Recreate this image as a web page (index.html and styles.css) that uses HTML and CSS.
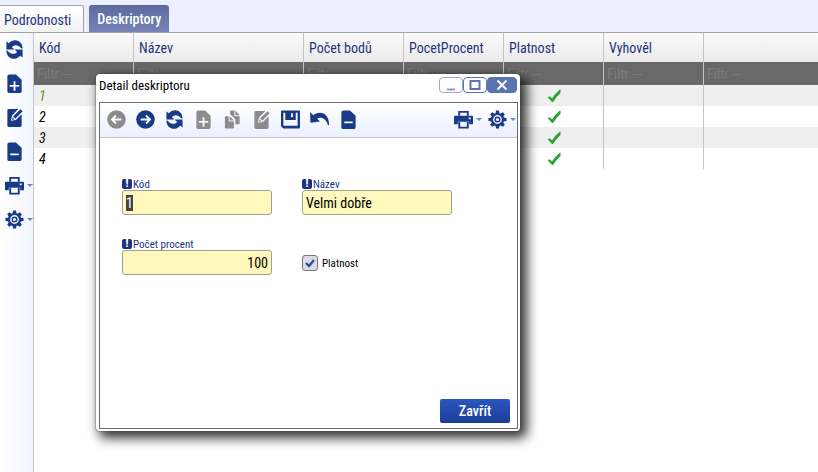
FILE: index.html
```html
<!DOCTYPE html>
<html lang="cs">
<head>
    <meta charset="UTF-8">
    <meta name="viewport" content="width=device-width, initial-scale=1.0">
    <title>Deskriptory</title>
    <link rel="stylesheet" href="styles.css">
</head>
<body>
    <!-- Shared icons -->
    <svg class="sprite" aria-hidden="true">
        <symbol id="refresh" viewBox="0 0 20 20">
            <path d="M1.500 1.500v8.500H10L7.200 7.500C9.500 4.500 14 4.500 17.500 9h1C18.500 0 9-2.500 4 3.500z"/>
            <path d="M18.500 18.500V10H10l2.800 2.500C10.500 15.500 6 15.500 2.500 11h-1C1.500 20 11 22.500 16 16.500z"/>
        </symbol>
        <symbol id="add" viewBox="0 0 20 20">
            <path fill-rule="evenodd" d="M4.500.5h7L17.500 6v12.500q0 1.500-1.500 1.500H4Q2.500 20 2.500 18.500v-16q0-2 2-2zM9 7.500v4H5v2h4v4h2v-4h4v-2h-4v-4z"/>
        </symbol>
        <symbol id="remove" viewBox="0 0 20 20">
            <path fill-rule="evenodd" d="M4.500.5h7L17.500 6v12.500q0 1.500-1.500 1.500H4Q2.500 20 2.500 18.500v-16q0-2 2-2zM5.500 12v2h9v-2z"/>
        </symbol>
        <symbol id="copy" viewBox="0 0 20 20">
            <path d="M3 6.500h3v5.500h5.500V18.500q0 1-1 1H3q-1 0-1-1v-11q0-1 1-1zM7 6.500l4.500 4.500H7z"/>
            <path d="M8.500.5h3.500v6h5.500V14q0 1-1 1H13V10L8.500 5H7.500V1.500q0-1 1-1zM13 .5l4.500 5H13z"/>
        </symbol>
        <symbol id="edit" viewBox="0 0 20 20">
            <path d="M4 1h10L7.500 8l-1.300 5.500L11.500 12.500 17.500 6.500V18.500q0 1.500-1.500 1.500H4Q2.500 20 2.500 18.500v-16Q2.500 1 4 1z"/>
            <path d="M8.500 9L16.300 1.200l2.300 2.200-7.800 7.800zM7.900 10l2 1.900-2.500.600z"/>
        </symbol>
        <symbol id="printer" viewBox="0 0 20 20">
            <path fill-rule="evenodd" d="M4.500 1h11v5h-11zM6.500 3V6h7V3z"/>
            <path fill-rule="evenodd" d="M1 6h18q1 0 1 1v8h-4v-3H4v3H0V7q0-1 1-1zM15.500 8v1.800h2V8z"/>
            <path fill-rule="evenodd" d="M4.500 12h11v7.500h-11zM6.500 12.500v5h7v-5z"/>
        </symbol>
        <symbol id="gear" viewBox="0 0 20 20">
            <circle cx="10" cy="10" r="5.800" fill="none" stroke="currentColor" stroke-width="2.300"/>
            <circle cx="10" cy="10" r="2.400" fill="none" stroke="currentColor" stroke-width="1.500"/>
            <path d="M8.500.5h3l.7 3.500H7.800zM8.500 19.500h3l.7-3.500H7.800zM.5 8.500v3l3.500.7V7.800zM19.500 8.500v3l-3.500.7V7.800z"/>
            <path d="M2.300 4.400l2.100-2.100 3 2-3.100 3.100zM17.700 4.400l-2.100-2.100-3 2 3.100 3.100zM2.300 15.600l2.100 2.100 3-2-3.100-3.100zM17.700 15.600l-2.100 2.100-3-2 3.100-3.100z"/>
        </symbol>
        <symbol id="back" viewBox="0 0 20 20">
            <circle cx="10" cy="10" r="9.800"/>
            <path class="cut" d="M15 10H5.500M9.500 5.800L5.300 10l4.200 4.200"/>
        </symbol>
        <symbol id="forward" viewBox="0 0 20 20">
            <circle cx="10" cy="10" r="9.800"/>
            <path class="cut" d="M5 10h9.500M10.500 5.800l4.200 4.200-4.200 4.200"/>
        </symbol>
        <symbol id="save" viewBox="0 0 20 20">
            <path fill-rule="evenodd" d="M1 .5h18q1 0 1 1v17q0 1-1 1H2.500L0 17V1.500Q0 .5 1 .5zM2.500 3v13.500h15V3h-2v7.500h-11V3z"/>
            <path d="M5.500 2h9v7h-9z"/>
            <path class="cut-fill" d="M10.500 3.500h2v4h-2z"/>
        </symbol>
        <symbol id="undo" viewBox="0 0 20 20">
            <path d="M0 2l.5 11.500L10.500 12 7.500 9c4.500-2 9 0 11.500 7h1C20.500 4.500 11.500-.5 3.500 5.500z"/>
        </symbol>
        <symbol id="check" viewBox="0 0 14 14">
            <path d="M.5 8L3 7.500l2 2Q8.500 4 13 .5h.5V4Q9 8 6 13H5z"/>
        </symbol>
    </svg>

    <nav class="tabs">
        <a href="#" class="tab">Podrobnosti</a>
        <a href="#" class="tab tab-active">Deskriptory</a>
    </nav>

    <main class="content">
        <div class="side-bar">
            <button type="button" class="icon-btn" aria-label="Obnovit"><svg><use href="#refresh"/></svg></button>
            <button type="button" class="icon-btn" aria-label="Přidat"><svg><use href="#add"/></svg></button>
            <button type="button" class="icon-btn" aria-label="Upravit"><svg><use href="#edit"/></svg></button>
            <button type="button" class="icon-btn" aria-label="Smazat"><svg><use href="#remove"/></svg></button>
            <button type="button" class="icon-btn has-menu" aria-label="Tisk"><svg><use href="#printer"/></svg></button>
            <button type="button" class="icon-btn has-menu" aria-label="Nastavení"><svg><use href="#gear"/></svg></button>
        </div>

        <div class="grid-wrap">
            <table class="grid">
                <colgroup>
                    <col class="col"><col class="col-wide"><col class="col"><col class="col"><col class="col"><col class="col"><col>
                </colgroup>
                <thead>
                    <tr>
                        <th>Kód</th>
                        <th>Název</th>
                        <th>Počet bodů</th>
                        <th>PocetProcent</th>
                        <th>Platnost</th>
                        <th>Vyhověl</th>
                        <th></th>
                    </tr>
                    <tr class="filters">
                        <td><input type="text" placeholder="Filtr ---" aria-label="Filtr Kód"></td>
                        <td><input type="text" placeholder="Filtr ---" aria-label="Filtr Název"></td>
                        <td><input type="text" placeholder="Filtr ---" aria-label="Filtr Počet bodů"></td>
                        <td><input type="text" placeholder="Filtr ---" aria-label="Filtr PocetProcent"></td>
                        <td><input type="text" placeholder="Filtr ---" aria-label="Filtr Platnost"></td>
                        <td><input type="text" placeholder="Filtr ---" aria-label="Filtr Vyhověl"></td>
                        <td><input type="text" placeholder="Filtr ---" aria-label="Filtr"></td>
                    </tr>
                </thead>
                <tbody>
                    <tr class="current"><td>1</td><td></td><td></td><td></td><td class="tick"><svg><use href="#check"/></svg></td><td></td><td></td></tr>
                    <tr><td>2</td><td></td><td></td><td></td><td class="tick"><svg><use href="#check"/></svg></td><td></td><td></td></tr>
                    <tr><td>3</td><td></td><td></td><td></td><td class="tick"><svg><use href="#check"/></svg></td><td></td><td></td></tr>
                    <tr><td>4</td><td></td><td></td><td></td><td class="tick"><svg><use href="#check"/></svg></td><td></td><td></td></tr>
                </tbody>
            </table>
        </div>
    </main>

    <!-- Detail window -->
    <div class="dialog" role="dialog" aria-labelledby="dialogTitle">
        <div class="dialog-head">
            <span id="dialogTitle">Detail deskriptoru</span>
            <div class="win-buttons">
                <button type="button" class="win-btn" aria-label="Minimalizovat"><svg viewBox="0 0 12 12"><path d="M2 10.500h8" stroke="#8f9cc0"/></svg></button>
                <button type="button" class="win-btn win-max" aria-label="Maximalizovat"><svg viewBox="0 0 12 12"><path d="M1.500 2h9v8h-9z"/></svg></button>
                <button type="button" class="win-btn win-close" aria-label="Zavřít okno"><svg viewBox="0 0 12 12"><path d="M1.500 1.500l9 9M10.500 1.500l-9 9"/></svg></button>
            </div>
        </div>

        <div class="dialog-body">
            <div class="toolbar">
                <button type="button" class="icon-btn" aria-label="Předchozí" disabled><svg><use href="#back"/></svg></button>
                <button type="button" class="icon-btn" aria-label="Další"><svg><use href="#forward"/></svg></button>
                <button type="button" class="icon-btn" aria-label="Obnovit"><svg><use href="#refresh"/></svg></button>
                <button type="button" class="icon-btn" aria-label="Přidat" disabled><svg><use href="#add"/></svg></button>
                <button type="button" class="icon-btn" aria-label="Kopírovat" disabled><svg><use href="#copy"/></svg></button>
                <button type="button" class="icon-btn" aria-label="Upravit" disabled><svg><use href="#edit"/></svg></button>
                <button type="button" class="icon-btn" aria-label="Uložit"><svg><use href="#save"/></svg></button>
                <button type="button" class="icon-btn" aria-label="Zpět"><svg><use href="#undo"/></svg></button>
                <button type="button" class="icon-btn" aria-label="Smazat"><svg><use href="#remove"/></svg></button>
                <div class="toolbar-right">
                    <button type="button" class="icon-btn has-menu" aria-label="Tisk"><svg><use href="#printer"/></svg></button>
                    <button type="button" class="icon-btn has-menu" aria-label="Nastavení"><svg><use href="#gear"/></svg></button>
                </div>
            </div>

            <form id="detailForm" class="form">
                <div class="field">
                    <label for="kod" class="required">Kód</label>
                    <input type="text" id="kod" value="1">
                </div>
                <div class="field">
                    <label for="nazev" class="required">Název</label>
                    <input type="text" id="nazev" value="Velmi dobře">
                </div>
                <div class="field">
                    <label for="procent" class="required">Počet procent</label>
                    <input type="text" id="procent" class="number" value="100">
                </div>
                <div class="check-field">
                    <input type="checkbox" id="platnost" checked>
                    <label for="platnost">Platnost</label>
                </div>
            </form>

            <div class="dialog-foot">
                <button type="button" class="btn">Zavřít</button>
            </div>
        </div>
    </div>

    <script>
        // Start with the first field selected
        document.getElementById("kod").focus();
        document.getElementById("kod").select();
    </script>
</body>
</html>
```
FILE: styles.css
```css
* {
    box-sizing: border-box;
}
body {
    margin: 0;
    min-height: 100vh;
    display: flex;
    flex-direction: column;
    font-family: "Roboto Condensed", Roboto, sans-serif;
    font-size: 14px;
    background-color: #fff;
    color: #000;
}
button,
input {
    font-family: inherit;
    font-size: inherit;
}
.sprite {
    position: absolute;
    width: 0;
    height: 0;
}

/* Tabs */
.tabs {
    display: flex;
    gap: 5px;
    height: 33px;
    padding-top: 5px;
    background-color: #ebefff;
    border-bottom: 1px solid #a3a3a3;
}
.tab {
    padding: 0 12px 0 4px;
    line-height: 28px;
    color: #1c3480;
    text-decoration: none;
    background: linear-gradient(#fff, #f3f3f3);
    border: 1px solid #a3a3a3;
    border-width: 1px 1px 0 0;
    border-radius: 0 3px 0 0;
}
.tab-active {
    padding: 0 8px;
    color: #fff;
    font-weight: 500;
    background: linear-gradient(#5c6b9e, #7683b4);
    border: none;
    border-radius: 3px 3px 0 0;
}

/* Icons */
.icon-btn {
    position: relative;
    display: flex;
    align-items: center;
    justify-content: center;
    width: 29px;
    height: 34px;
    padding: 0 0 1px;
    border: none;
    background: none;
    color: #183a87;
    cursor: pointer;
}
.icon-btn svg {
    width: 19px;
    height: 19px;
    fill: currentColor;
}
.icon-btn:disabled {
    color: #8c8c8c;
}
.has-menu::after {
    content: "";
    position: absolute;
    right: -4px;
    top: 15px;
    border: 3px solid transparent;
    border-top-color: #6f87bd;
    border-bottom: none;
}
.cut {
    fill: none;
    stroke: #fff;
    stroke-width: 2px;
}
.cut-fill {
    fill: #fff;
}

/* Grid with side bar */
.content {
    flex: 1;
    display: flex;
}
.side-bar {
    width: 34px;
    flex-shrink: 0;
    border-right: 1px solid #c4c4c4;
    background: linear-gradient(90deg, #fff, #f2f5ff);
}
.grid-wrap {
    flex: 1;
    min-width: 0;
}
.grid {
    width: 100%;
    table-layout: fixed;
    border-spacing: 0;
}
.col {
    width: 100px;
}
.col-wide {
    width: 170px;
}
.grid th {
    height: 29px;
    padding: 1px 5px 0;
    text-align: left;
    font-weight: 400;
    color: #1c3480;
    background: linear-gradient(#fafafa, #ebebeb);
}
.grid td {
    height: 21px;
    padding: 0 5px;
    font-style: italic;
}
.grid th:not(:last-child),
.grid td:not(:last-child) {
    border-right: 1px solid #c4c4c4;
}
.grid .filters td {
    height: 23px;
    padding: 0 3px;
    background-color: #696969;
}
.filters input {
    display: block;
    width: 100%;
    padding: 0;
    border: none;
    background: none;
    color: #fff;
}
.filters input::placeholder {
    color: #7c7c7c;
}
.grid tbody tr:nth-child(odd) {
    background-color: #efefef;
}
.current td {
    color: #5b9a0e;
}
.tick svg {
    display: block;
    width: 14px;
    height: 14px;
    margin: 0 auto;
    fill: #2ba32f;
}

/* Detail window */
.dialog {
    position: absolute;
    left: 96px;
    top: 74px;
    width: 424px;
    padding: 0 2px 2px 3px;
    background-color: #fff;
    border-radius: 4px;
    box-shadow: 0 0 2px #444, 5px 5px 12px 2px rgba(0, 0, 0, 0.8);
}
.dialog-head {
    display: flex;
    justify-content: space-between;
    height: 28px;
    padding: 3px 1px 0 0;
    font-size: 13px;
    line-height: 17px;
}
.win-buttons {
    display: flex;
}
.win-btn {
    display: flex;
    align-items: center;
    justify-content: center;
    width: 24px;
    height: 16px;
    padding: 0;
    border: 1px solid #9aa8cb;
    border-radius: 4px;
    background-color: #fff;
}
.win-btn svg {
    width: 12px;
    height: 12px;
    fill: none;
    stroke: #5b74b0;
    stroke-width: 2px;
}
.win-max {
    border-color: #5b74b0;
}
.win-close {
    width: 30px;
    border-color: #5b74b0;
    background-color: #5b74b0;
}
.win-close svg {
    stroke: #fff;
}
.dialog-body {
    border: 1px solid #6b6b6b;
}
.toolbar {
    display: flex;
    padding-left: 2px;
    background: linear-gradient(#fff, #ebf0ff);
    border-bottom: 1px solid #c4c4c4;
}
.toolbar-right {
    display: flex;
    gap: 5px;
    margin-left: auto;
    padding-right: 5px;
}
.form {
    display: grid;
    grid-template-columns: 150px 150px;
    gap: 24px 30px;
    padding: 41px 22px 0;
}
.field {
    display: flex;
    flex-direction: column;
}
.field label {
    display: flex;
    align-items: center;
    gap: 1px;
    height: 11px;
    font-size: 11px;
    line-height: 11px;
    color: #1c3480;
}
.required::before {
    content: "!";
    width: 10px;
    height: 10px;
    margin-bottom: 1px;
    border-radius: 2px;
    background-color: #1c3480;
    color: #fff;
    font-weight: 900;
    line-height: 10px;
    text-align: center;
}
.field input {
    width: 100%;
    height: 25px;
    padding: 0 3px;
    border: 1px solid #a0a08c;
    border-radius: 3px;
    background-color: #fff9bd;
    outline: none;
}
.field input::selection {
    background-color: #444;
    color: #fff;
}
.field .number {
    text-align: right;
}
.check-field {
    display: flex;
    align-items: center;
    gap: 4px;
    padding-top: 12px;
    font-size: 11px;
}
.check-field input {
    appearance: none;
    width: 16px;
    height: 16px;
    margin: 0;
    border: 1px solid #777;
    border-radius: 3px;
    background: #dadde6;
}
.check-field input:checked {
    background: #dadde6 url("data:image/svg+xml,%3Csvg xmlns='http://www.w3.org/2000/svg' viewBox='0 0 14 14'%3E%3Cpath d='M3 7l3 3 5-6' fill='none' stroke='%23304f9a' stroke-width='2.400'/%3E%3C/svg%3E") center no-repeat;
}
.dialog-foot {
    display: flex;
    justify-content: flex-end;
    padding: 124px 7px 5px;
}
.btn {
    width: 70px;
    height: 24px;
    padding: 0;
    border: none;
    border-radius: 2px;
    background: linear-gradient(#2a57c0, #1c3c98);
    color: #fff;
    font-weight: 500;
    cursor: pointer;
}
```
